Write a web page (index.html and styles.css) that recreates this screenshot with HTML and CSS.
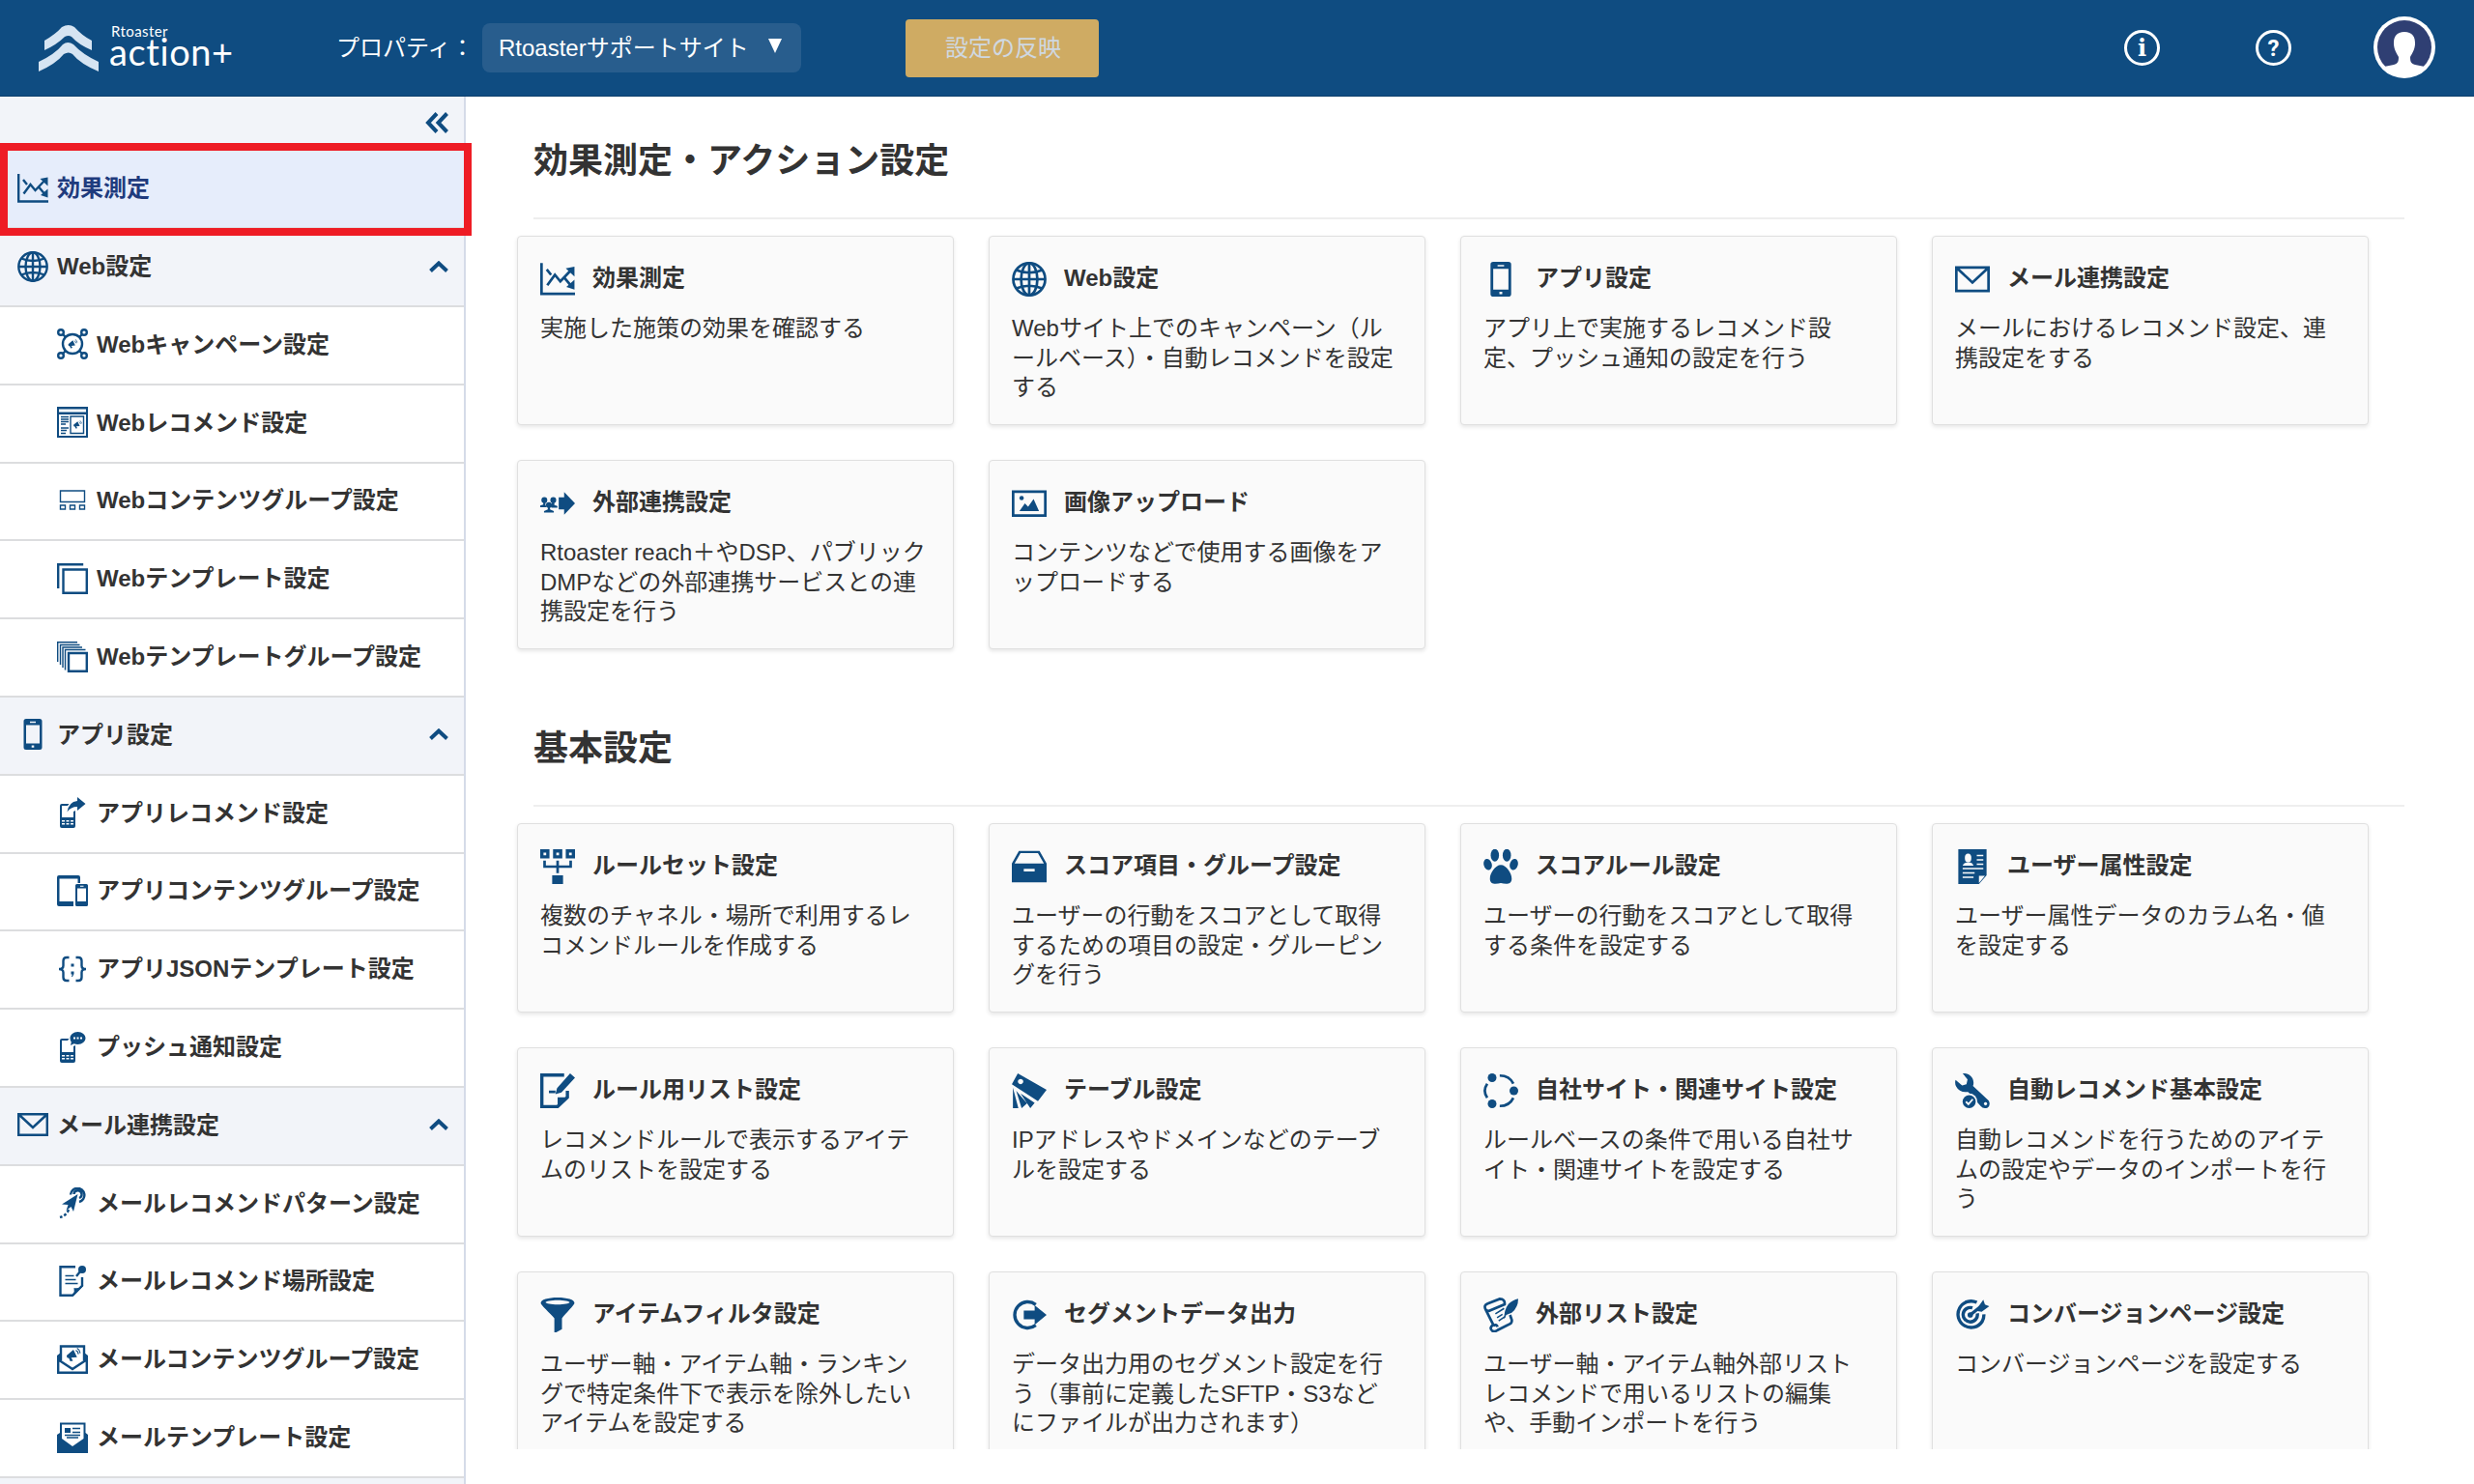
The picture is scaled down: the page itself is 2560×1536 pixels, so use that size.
FILE: index.html
```
<!DOCTYPE html>
<html lang="ja">
<head>
  <meta charset="UTF-8">
  <title>Rtoaster action+</title>
  <meta name="viewport" content="width=device-width, initial-scale=1.0">
  <link rel="stylesheet" href="styles.css">
</head>
<body>

<!-- Icon sprite -->
<svg class="sprite" width="0" height="0">
  <symbol id="i-chart" viewBox="0 0 32 32">
    <path class="line" d="M1.200 1v28.500h31M6.500 21.500l7-9.500 5 6L28 8M6 7l4 5M22.500 15l5 6"/>
    <path d="M31.500 4.500v9l-8-7.500zM31.500 25.500v-9l-7.500 6.500z"/>
  </symbol>
  <symbol id="i-globe" viewBox="0 0 32 32">
    <g class="line"><circle cx="16" cy="16" r="14.700"/><ellipse cx="16" cy="16" rx="7.500" ry="14.700"/><path d="M16 1v30M1 16h30M4 7.500q12 5 24 0M4 24.500q12-5 24 0"/></g>
  </symbol>
  <symbol id="i-horn" viewBox="0 0 32 32">
    <path d="M2 17L17 4l8 17-13 1 4 7-6 1-3-7-4-1z"/>
    <path class="line" d="M22 6q5 1 6 8M25 1q6 3 7 11"/>
  </symbol>
  <symbol id="i-campaign" viewBox="0 0 32 32">
    <g class="line"><circle cx="16" cy="16" r="10"/><circle cx="4" cy="4" r="2.800"/><circle cx="28" cy="4" r="2.800"/><circle cx="4" cy="28" r="2.800"/><circle cx="28" cy="28" r="2.800"/><path d="M6 6l3 3M26 6l-3 3M6 26l3-3M26 26l-3-3"/></g>
    <use href="#i-horn" x="10.500" y="11" width="11" height="10"/>
  </symbol>
  <symbol id="i-webreco" viewBox="0 0 32 32">
    <path fill-rule="evenodd" d="M0 0h32v32H0zM2 2.500v3h28v-3zM2 8v22h28V8z"/>
    <path class="thin" d="M4 10.500h8M4 13h8M4 15.500h8M4 18h5M4 22h8M4 24.500h6M4 27.500h5M14 10h13.500v17.500H14z"/>
    <use href="#i-horn" x="16" y="14" width="10" height="9"/>
  </symbol>
  <symbol id="i-content" viewBox="0 0 32 32">
    <path class="thin" d="M3.500 6h25v11.500h-25zM3.500 21h5v4h-5zM13.500 21h5v4h-5zM23.500 21h5v4h-5z"/>
  </symbol>
  <symbol id="i-template" viewBox="0 0 32 32">
    <path class="line" d="M1.200 26V1.200h26M6.500 6.500h24.300v24.300H6.500z"/>
  </symbol>
  <symbol id="i-templates" viewBox="0 0 32 32">
    <path class="thin" d="M.7 21V.7H21M3.500 24V3.500h20M6 27V6h20M8.500 29.500v-21h21"/>
    <path class="line" d="M12 12h18.800v18.800H12z"/>
  </symbol>
  <symbol id="i-phone" viewBox="0 0 32 32">
    <path fill-rule="evenodd" d="M9 0h14q2.500 0 2.500 2.500v27Q25.500 32 23 32H9q-2.500 0-2.500-2.500v-27Q6.500 0 9 0zM9 6.500v19h14v-19zM13 2.800v1.400h6V2.800zM14.700 27.500v2.300h2.600v-2.300z"/>
  </symbol>
  <symbol id="i-keypad" viewBox="0 0 32 32">
    <path fill-rule="evenodd" d="M5 7h7.500L11 9H5v12h12v-6l2-1v16q0 2-2 2H5q-2 0-2-2V9q0-2 2-2zM5 24v1.600h3V24zM9.500 24v1.600h3V24zM14 24v1.600h3V24zM5 27v1.600h3V27zM9.500 27v1.600h3V27zM14 27v1.600h3V27z"/>
  </symbol>
  <symbol id="i-appreco" viewBox="0 0 32 32">
    <use href="#i-keypad"/>
    <path d="M21 0l8.500 7-8.500 7v-4q-7 0-10.500 5.500Q12 5 21 4z"/>
  </symbol>
  <symbol id="i-appgroup" viewBox="0 0 32 32">
    <path fill-rule="evenodd" d="M2 0h20q2 0 2 2v6h-2.500V3.500h-19V27H17v5H2q-2 0-2-2V2q0-2 2-2z"/>
    <path fill-rule="evenodd" d="M20.500 9h10q1.500 0 1.500 1.500v20q0 1.500-1.500 1.500h-10q-1.500 0-1.500-1.500v-20Q19 9 20.500 9zM21 13.500V27h9V13.500zM24 10.700v1h3.500v-1z"/>
  </symbol>
  <symbol id="i-json" viewBox="0 0 32 32">
    <path class="line" d="M12.500 4H10Q6.500 4 6.500 7.500v5q0 3.500-4.500 3.500 4.500 0 4.500 3.500v5Q6.500 28 10 28h2.500M19.500 4H22q3.500 0 3.500 3.500v5q0 3.500 4.500 3.500-4.500 0-4.500 3.500v5q0 3.500-3.500 3.500h-2.500"/>
    <path d="M14.500 10.500h3v3h-3zM14.500 18.500h3v2.500l-1.500 3h-1l.8-2.500h-1.300z"/>
  </symbol>
  <symbol id="i-push" viewBox="0 0 32 32">
    <use href="#i-keypad"/>
    <path fill-rule="evenodd" d="M21.500 0C26 0 29.500 3 29.500 6.500S26 13 21.500 13q-2 0-4-.7L14 14l.8-3.500q-1.300-1.800-1.300-4C13.500 3 17 0 21.500 0zM17 5.500v2h2v-2zM20.500 5.500v2h2v-2zM24 5.500v2h2v-2z"/>
  </symbol>
  <symbol id="i-mail" viewBox="0 0 32 32">
    <path class="line" d="M1.200 5.200h29.600v21.600H1.200zM2 6l14 13L30 6"/>
  </symbol>
  <symbol id="i-plane" viewBox="0 0 32 32">
    <g class="line"><path d="M14 7.500a7.200 7.200 0 1 1 9 7.500M17.500 7a4 4 0 1 1 5.500 4"/><path stroke-dasharray="3 2" d="M12 23q-2 6-9 8"/></g>
    <path d="M21.500 7L17 25l-2.500-5-5 4 2-6L5 17.500z"/>
  </symbol>
  <symbol id="i-place" viewBox="0 0 32 32">
    <path class="line" d="M19 1.200H3.500v29.600H16l10-10V12"/>
    <path class="thin" d="M8.500 10.500h9M8.500 14.500h11M8.500 18.500h13"/>
    <path d="M27.500 20.500L16.500 32q2-5 1-9 5 1 10-2.500z"/>
    <circle cx="26" cy="4" r="4"/><path class="line" d="M24 6l-4 5"/>
  </symbol>
  <symbol id="i-mailgroup" viewBox="0 0 32 32">
    <path class="line" d="M4 17V2.500h24V17M1.200 12v17.800h29.600V12M1.500 16.500L16 26l14.500-9.500"/>
    <path d="M0 12l4-3v9l-4-1zM32 12l-4-3v9l4-1z"/>
    <use href="#i-horn" x="8" y="4" width="17" height="15"/>
  </symbol>
  <symbol id="i-mailtemplate" viewBox="0 0 32 32">
    <path fill-rule="evenodd" d="M3 .5h26.500V11l2.500 2v19H0V13l3-2zM5 2.500V17l11 8 11.500-8V2.500z"/>
    <path d="M8 6h6v5H8z"/><path class="thin" d="M16 6.500h8M16 10.500h8M8 13.500h16M10 16h12"/>
  </symbol>
  <symbol id="i-external" viewBox="0 0 32 32">
    <path d="M17 10.500h5V5.500L32 16 22 26.500v-5h-5z"/>
    <circle cx="3.800" cy="13" r="2.700"/><circle cx="12" cy="13" r="2.700"/><circle cx="8" cy="17.500" r="2.700"/>
    <path d="M2.800 15h2v2.500l1.200 2H0v-1.500l2.800-1zM11 15h2v2.500l2.800 1v1.500h-5.500l-.8-2zM7 19h2v2.500l3.500 1.500v1.500h-9V23L7 21.500z"/>
  </symbol>
  <symbol id="i-image" viewBox="0 0 32 32">
    <path class="line" d="M1.200 5.200h29.600v22H1.200z"/><circle cx="9" cy="11" r="2"/><path d="M7 23l5-7 3 3 5-7 5 11z"/>
  </symbol>
  <symbol id="i-ruleset" viewBox="0 0 32 32">
    <path class="bold" d="M1.500 1.500h5.500V7H1.500zM13.300 1.500h5.500V7h-5.500zM25 1.500h5.500V7H25z"/>
    <path class="line" d="M4 10.500V16h24v-5.500M16 10.500V22"/><path d="M11 24h10v8H11z"/>
  </symbol>
  <symbol id="i-drawer" viewBox="0 0 32 32">
    <path fill-rule="evenodd" d="M6.500 1.500h19L32 13v17.500H0V13zM8 3.500L2.500 13h27L24 3.500zM11 18v2.500h10V18z"/>
  </symbol>
  <symbol id="i-paw" viewBox="0 0 32 32">
    <ellipse cx="10.500" cy="5.500" rx="3.800" ry="5.800"/><ellipse cx="21.500" cy="5.500" rx="3.800" ry="5.800"/><ellipse cx="4" cy="14" rx="3.700" ry="5.300" transform="rotate(-15 4 14)"/><ellipse cx="28" cy="14" rx="3.700" ry="5.300" transform="rotate(15 28 14)"/>
    <path d="M16 14.500c5 0 10 7.500 10 12.500 0 6-6 5-10 4-4 1-10 2-10-4 0-5 5-12.500 10-12.500z"/>
  </symbol>
  <symbol id="i-profile" viewBox="0 0 32 32">
    <path d="M3 0h26v24l-7 8H3z"/>
    <g class="cut"><ellipse cx="12" cy="8" rx="3" ry="4"/><path d="M7 15q1-3 5-3t5 3z"/><path d="M20 5h6v1.500h-6zM20 9h6v1.500h-6zM20 13h6v1.500h-6zM7 17h19v1.500H7zM7 21h11v1.500H7zM7 25h10v1.500H7zM22 24.500h5.500L22 31z"/></g>
  </symbol>
  <symbol id="i-edit" viewBox="0 0 32 32">
    <path class="bold" d="M22 1.500H1.500v29H16l9-8.500v-6"/><path d="M27.500 0L32 4 19.500 17.500 14 19l1.500-5.500zM16 22h10L16 31z"/><path class="line" d="M8 17h6"/>
  </symbol>
  <symbol id="i-tags" viewBox="0 0 32 32">
    <path fill-rule="evenodd" d="M5.500 0L32 15l-8 10.500L0 10zM8 5a2.500 2.500 0 1 0 .1 0z"/>
    <path d="M1 13l5 19H1zM4 16l10 11.500L9 32zM8 18.500l13 8.500-4 5z"/>
  </symbol>
  <symbol id="i-sites" viewBox="0 0 32 32">
    <circle cx="8" cy="4" r="4"/><circle cx="28" cy="16" r="4"/><circle cx="8" cy="28" r="4"/>
    <path class="line" d="M3.500 9.500q-4.500 6.500 0 13M15 2q9 0 12.500 7.500M15 30q9 0 12.500-7.500"/>
  </symbol>
  <symbol id="i-wrench" viewBox="0 0 32 32">
    <path fill-rule="evenodd" d="M7 0q6-.5 9 4.500 1.800 3.500.5 7L31 25q2 4-1 6.500-4 1.500-6.500-1.500L12 17q-8 1-11-5-1.500-3-.5-6l6 5 4-1 1-4.500zM28 26.500a1.500 1.500 0 1 0 .1 0z"/>
    <circle class="cut" cx="13" cy="26" r="7.500"/><circle cx="13" cy="26" r="6"/><path class="cut-line" d="M10 26l2.300 2.300 4-4.500"/>
  </symbol>
  <symbol id="i-filter" viewBox="0 0 32 32">
    <path fill-rule="evenodd" d="M16 0c9 0 15.500 2 15.500 5 0 2-8 9-11.500 14v10l-7 4V19C9 14 .5 7 .5 5 .5 2 7 0 16 0zM16 2.500c-6 0-11 1-11 2s5 2 11 2 11-1 11-2-5-2-11-2z"/>
  </symbol>
  <symbol id="i-export" viewBox="0 0 32 32">
    <path class="bold" d="M22 6.500A12 12 0 1 0 22 25.500"/><path d="M11 12h10V7l11 9-11 9v-5H11z"/>
  </symbol>
  <symbol id="i-scroll" viewBox="0 0 32 32">
    <path class="line" d="M2 11Q0 7 4 5.500L15 1.300q5 0 4.500 5L7 11.500q-3 2-5-.5l7 14q-4 3-1 5.500 2 1.500 5-.5l12-6q2-2 .5-5l-1-3M9 26q3-2 4 1"/>
    <path class="thin" d="M11 15l8-5M12.500 18.500l5-3M14 21.500l6-4"/>
    <path d="M32 1q0 8-6 13l-5 2-2 4q0-9 4-14 4-4 9-5z"/>
  </symbol>
  <symbol id="i-target" viewBox="0 0 32 32">
    <g class="bold"><path d="M20 4.500a12.100 12.100 0 1 0 5 17.500 12 12 0 0 0 1.500-6.500M16 9.500a6.600 6.600 0 1 0 4.500 5M14 16L24 8"/></g>
    <circle cx="14" cy="16" r="2.500"/><path d="M21 9l5-7 1.500 4.500 4 1.500-7 5-4-.5z"/>
  </symbol>
  <symbol id="i-up" viewBox="0 0 20 12"><path class="chevron" d="M1.500 10.500L10 2.500l8.500 8"/></symbol>
</svg>

<header class="header">
  <div class="logo">
    <svg class="logo-mark" viewBox="0 0 62 48"><path d="M6 16Q18 9 24 2q7-4 13 0 8 9 18 14v10Q41 20 34 12q-3-2-7 0-8 8-21 14z"/><path d="M0 38q17-8 25-18 5-4 11 0 9 10 26 18v10Q43 40 35 30q-4-3-9 0-8 10-26 18z"/></svg>
    <div class="logo-text"><span class="logo-small">Rtoaster</span><span class="logo-big">action+</span></div>
  </div>
  <span class="property-label">プロパティ：</span>
  <div class="property-select"><span>Rtoasterサポートサイト</span><span class="caret"></span></div>
  <button class="apply">設定の反映</button>
  <div class="header-icons">
    <span class="round-icon">i</span>
    <span class="round-icon">?</span>
    <svg class="avatar" viewBox="0 0 64 64"><circle cx="32" cy="32" r="32" fill="#fff"/><circle cx="32" cy="32" r="28" fill="#2f3f73"/><path fill="#fff" d="M32 16c8 0 11.500 5 11 13-.5 6-3 9-5 13 0 5 1 7 5 8l10 2q-9 10-21 10T11 52l10-2c4-1 5-3 5-8-2-4-4.500-7-5-13-.5-8 3-13 11-13z"/></svg>
  </div>
</header>

<div class="page">
  <nav class="sidebar">
    <div class="collapse"><svg width="25" height="22" viewBox="0 0 25 22"><path class="chevron" d="M12 1.500L3 11l9 9.500M22.500 1.500l-9 9.500 9 9.500"/></svg></div>
    <a class="item active"><svg class="icon"><use href="#i-chart"/></svg>効果測定<span class="marker"></span></a>
    <a class="item"><svg class="icon"><use href="#i-globe"/></svg>Web設定<svg class="up"><use href="#i-up"/></svg></a>
    <a class="item sub"><svg class="icon"><use href="#i-campaign"/></svg>Webキャンペーン設定</a>
    <a class="item sub"><svg class="icon"><use href="#i-webreco"/></svg>Webレコメンド設定</a>
    <a class="item sub"><svg class="icon"><use href="#i-content"/></svg>Webコンテンツグループ設定</a>
    <a class="item sub"><svg class="icon"><use href="#i-template"/></svg>Webテンプレート設定</a>
    <a class="item sub"><svg class="icon"><use href="#i-templates"/></svg>Webテンプレートグループ設定</a>
    <a class="item"><svg class="icon"><use href="#i-phone"/></svg>アプリ設定<svg class="up"><use href="#i-up"/></svg></a>
    <a class="item sub"><svg class="icon"><use href="#i-appreco"/></svg>アプリレコメンド設定</a>
    <a class="item sub"><svg class="icon"><use href="#i-appgroup"/></svg>アプリコンテンツグループ設定</a>
    <a class="item sub"><svg class="icon"><use href="#i-json"/></svg>アプリJSONテンプレート設定</a>
    <a class="item sub"><svg class="icon"><use href="#i-push"/></svg>プッシュ通知設定</a>
    <a class="item"><svg class="icon"><use href="#i-mail"/></svg>メール連携設定<svg class="up"><use href="#i-up"/></svg></a>
    <a class="item sub"><svg class="icon"><use href="#i-plane"/></svg>メールレコメンドパターン設定</a>
    <a class="item sub"><svg class="icon"><use href="#i-place"/></svg>メールレコメンド場所設定</a>
    <a class="item sub"><svg class="icon"><use href="#i-mailgroup"/></svg>メールコンテンツグループ設定</a>
    <a class="item sub"><svg class="icon"><use href="#i-mailtemplate"/></svg>メールテンプレート設定</a>
  </nav>

  <main class="main">
    <section class="section">
      <h2>効果測定・アクション設定</h2>
      <div class="cards">
        <div class="card"><h3><svg class="icon"><use href="#i-chart"/></svg>効果測定</h3><p>実施した施策の効果を確認する</p></div>
        <div class="card"><h3><svg class="icon"><use href="#i-globe"/></svg>Web設定</h3><p>Webサイト上でのキャンペーン（ル<br>ールベース）・自動レコメンドを設定<br>する</p></div>
        <div class="card"><h3><svg class="icon"><use href="#i-phone"/></svg>アプリ設定</h3><p>アプリ上で実施するレコメンド設<br>定、プッシュ通知の設定を行う</p></div>
        <div class="card"><h3><svg class="icon"><use href="#i-mail"/></svg>メール連携設定</h3><p>メールにおけるレコメンド設定、連<br>携設定をする</p></div>
        <div class="card"><h3><svg class="icon"><use href="#i-external"/></svg>外部連携設定</h3><p>Rtoaster reach＋やDSP、パブリック<br>DMPなどの外部連携サービスとの連<br>携設定を行う</p></div>
        <div class="card"><h3><svg class="icon"><use href="#i-image"/></svg>画像アップロード</h3><p>コンテンツなどで使用する画像をア<br>ップロードする</p></div>
      </div>
    </section>

    <section class="section">
      <h2>基本設定</h2>
      <div class="cards">
        <div class="card"><h3><svg class="icon"><use href="#i-ruleset"/></svg>ルールセット設定</h3><p>複数のチャネル・場所で利用するレ<br>コメンドルールを作成する</p></div>
        <div class="card"><h3><svg class="icon"><use href="#i-drawer"/></svg>スコア項目・グループ設定</h3><p>ユーザーの行動をスコアとして取得<br>するための項目の設定・グルーピン<br>グを行う</p></div>
        <div class="card"><h3><svg class="icon"><use href="#i-paw"/></svg>スコアルール設定</h3><p>ユーザーの行動をスコアとして取得<br>する条件を設定する</p></div>
        <div class="card"><h3><svg class="icon"><use href="#i-profile"/></svg>ユーザー属性設定</h3><p>ユーザー属性データのカラム名・値<br>を設定する</p></div>
        <div class="card"><h3><svg class="icon"><use href="#i-edit"/></svg>ルール用リスト設定</h3><p>レコメンドルールで表示するアイテ<br>ムのリストを設定する</p></div>
        <div class="card"><h3><svg class="icon"><use href="#i-tags"/></svg>テーブル設定</h3><p>IPアドレスやドメインなどのテーブ<br>ルを設定する</p></div>
        <div class="card"><h3><svg class="icon"><use href="#i-sites"/></svg>自社サイト・関連サイト設定</h3><p>ルールベースの条件で用いる自社サ<br>イト・関連サイトを設定する</p></div>
        <div class="card"><h3><svg class="icon"><use href="#i-wrench"/></svg>自動レコメンド基本設定</h3><p>自動レコメンドを行うためのアイテ<br>ムの設定やデータのインポートを行<br>う</p></div>
        <div class="card"><h3><svg class="icon"><use href="#i-filter"/></svg>アイテムフィルタ設定</h3><p>ユーザー軸・アイテム軸・ランキン<br>グで特定条件下で表示を除外したい<br>アイテムを設定する</p></div>
        <div class="card"><h3><svg class="icon"><use href="#i-export"/></svg>セグメントデータ出力</h3><p>データ出力用のセグメント設定を行<br>う（事前に定義したSFTP・S3など<br>にファイルが出力されます）</p></div>
        <div class="card"><h3><svg class="icon"><use href="#i-scroll"/></svg>外部リスト設定</h3><p>ユーザー軸・アイテム軸外部リスト<br>レコメンドで用いるリストの編集<br>や、手動インポートを行う</p></div>
        <div class="card"><h3><svg class="icon"><use href="#i-target"/></svg>コンバージョンページ設定</h3><p>コンバージョンページを設定する</p></div>
      </div>
    </section>
  </main>
</div>

</body>
</html>
```
FILE: styles.css
```
* {
  box-sizing: border-box;
}
body {
  margin: 0;
  height: 1536px;
  overflow: hidden;
  background: #fff;
  color: #333;
  font-family: "Liberation Sans", "Noto Sans CJK JP", sans-serif;
  font-size: 24px;
}
.sprite {
  display: none;
}
.icon {
  flex: none;
  color: #0f4c81;
  fill: currentColor;
}
.thin, .line, .bold, .chevron {
  fill: none;
  stroke: #0f4c81;
  stroke-width: 1.4;
}
.line {
  stroke-width: 2.4;
}
.bold {
  stroke-width: 3;
}
.chevron {
  stroke-width: 4;
}
.cut {
  fill: #fafafa;
}
.cut-line {
  fill: none;
  stroke: #fafafa;
  stroke-width: 1.6;
}

/* Header */
.header {
  display: flex;
  align-items: center;
  height: 100px;
  padding: 0 40px;
  background: #0f4c81;
  border-bottom: 1px solid #0c3f6c;
  color: #fff;
}
.logo {
  display: flex;
  gap: 11px;
  width: 308px;
}
.logo-mark {
  width: 62px;
  height: 48px;
  fill: #d6e4f2;
}
.logo-text {
  display: flex;
  flex-direction: column;
}
.logo-text span {
  font-family: Lato, sans-serif;
}
.logo-small {
  margin: -1px 0 0 2px;
  font-size: 15px;
  line-height: 14px;
  letter-spacing: 0.4px;
}
.logo-big {
  font-size: 38px;
  line-height: 28px;
  letter-spacing: 0.6px;
}
.property-label {
  width: 151px;
  white-space: nowrap;
  padding-bottom: 4px;
}
.property-select {
  display: flex;
  align-items: center;
  gap: 20px;
  width: 330px;
  height: 51px;
  padding: 0 0 4px 17px;
  border-radius: 8px;
  background: #285d8d;
  white-space: nowrap;
}
.caret {
  border: 7.500px solid transparent;
  border-top: 15px solid #fff;
  border-bottom: 0;
}
.apply {
  width: 200px;
  height: 60px;
  margin-left: 108px;
  padding: 0 0 4px 2px;
  border: 0;
  border-radius: 4px;
  background: #cfab63;
  color: #cfd8e1;
  font: inherit;
}
.header-icons {
  display: flex;
  align-items: center;
  margin-left: auto;
}
.round-icon {
  display: flex;
  align-items: center;
  justify-content: center;
  width: 37px;
  height: 37px;
  margin-right: 99px;
  border: 3.500px solid #fff;
  border-radius: 50%;
  font-family: "DejaVu Serif", serif;
  font-size: 24px;
  font-weight: bold;
}
.round-icon + .round-icon {
  margin-right: 85px;
  font-family: Roboto, sans-serif;
}
.avatar {
  width: 64px;
  height: 64px;
  margin-bottom: 2px;
}

/* Sidebar */
.page {
  display: flex;
  height: 1436px;
}
.sidebar {
  flex: none;
  width: 482px;
  border-right: 2px solid #d5dbe8;
  background: #f2f4f9;
}
.collapse {
  display: flex;
  justify-content: flex-end;
  height: 56.400px;
  padding: 16px 15px 0 0;
}
.item {
  position: relative;
  display: flex;
  align-items: center;
  gap: 9px;
  height: 80.800px;
  padding: 0 16px 6px 18px;
  border-bottom: 2px solid #dcdddf;
  font-weight: bold;
  white-space: nowrap;
}
.item .icon {
  width: 32px;
  height: 32px;
  margin-top: 4px;
}
.item.active {
  background: #e6edfb;
  color: #1f3b7d;
}
.item.sub {
  padding-left: 59px;
  background: #fff;
}
.up {
  width: 20px;
  height: 12px;
  margin: 4px 0 0 auto;
}
/* Highlight frame around the active entry */
.marker {
  position: absolute;
  top: -8px;
  left: 0;
  width: 488px;
  height: 96px;
  border: 8px solid #ee1c25;
}

/* Main */
.main {
  flex: 1;
  height: 1400px;
  overflow: hidden;
  padding-left: 53px;
}
.section {
  height: 608px;
}
.section h2 {
  width: 1936px;
  height: 127px;
  margin: 0 0 17px 17px;
  padding-top: 41px;
  border-bottom: 2px solid #eee;
  font-size: 36px;
  line-height: 52px;
}
.cards {
  display: grid;
  grid-template-columns: repeat(4, 452px);
  grid-auto-rows: 196px;
  gap: 36px;
}
.card {
  padding: 20px 0 0 23px;
  border: 1px solid #e0e0e0;
  border-radius: 4px;
  background: #fafafa;
  box-shadow: 0 2px 4px rgba(0, 0, 0, 0.1);
  white-space: nowrap;
}
.card h3 {
  display: flex;
  align-items: center;
  gap: 18px;
  height: 40px;
  margin: 0;
  font-size: 24px;
}
.card .icon {
  width: 36px;
  height: 36px;
  margin-top: 8px;
}
.card p {
  margin: 20px 0 0;
  line-height: 30.700px;
}
```
